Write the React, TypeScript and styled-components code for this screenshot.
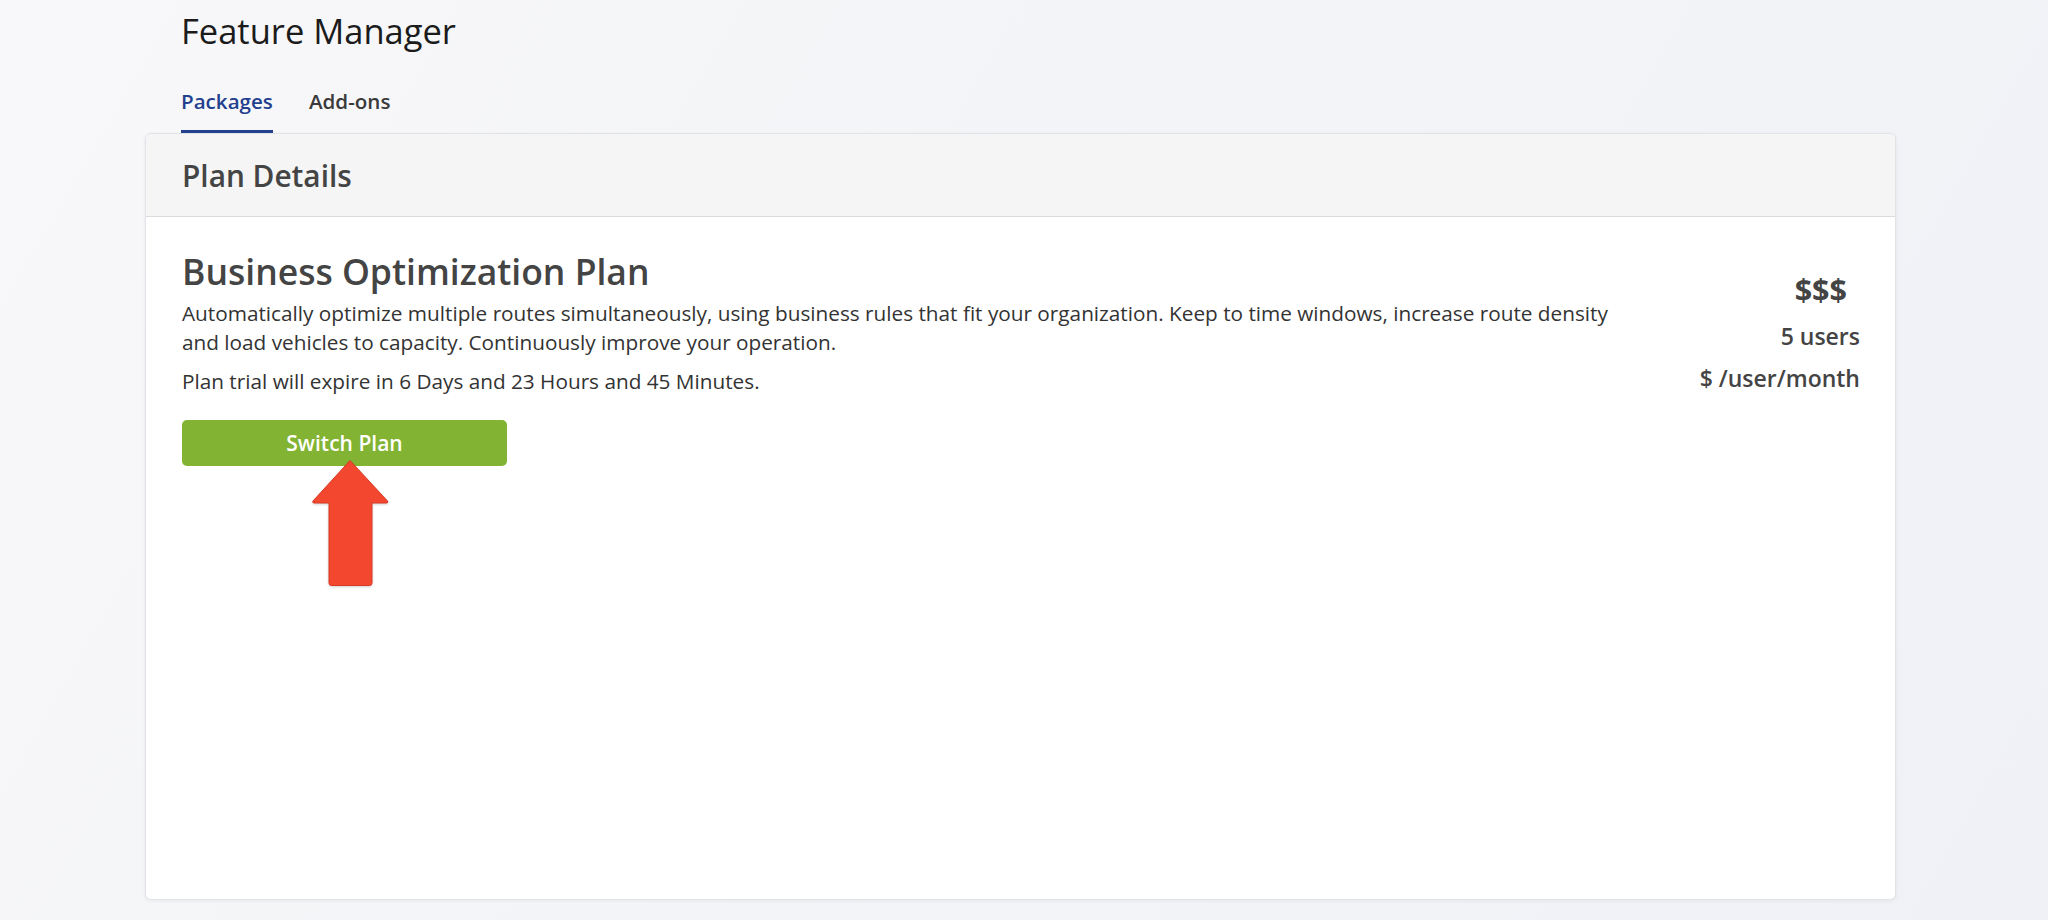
import React from "react";
import styled, { createGlobalStyle } from "styled-components";

const GlobalStyle = createGlobalStyle`
  html, body {
    margin: 0;
    padding: 0;
  }
  body {
    font-family: "Open Sans", "Noto Sans", Arial, sans-serif;
    background: linear-gradient(120deg, #f8f8fa 0%, #f3f4f7 50%, #eff1f6 100%);
    min-height: 920px;
  }
`;

const Page = styled.div`
  padding: 0 152px 20px 145px;
  box-sizing: border-box;
  width: 2048px;
  min-height: 920px;
`;

const TitleBar = styled.div`
  padding: 8px 0 0 36px;
`;

const Title = styled.h1`
  margin: 0;
  font-size: 34.5px;
  line-height: 46px;
  font-weight: 400;
  color: #1b1b1b;
`;

const Tabs = styled.div`
  display: flex;
  gap: 36px;
  margin-top: 32px;
  padding-left: 36px;
`;

const Tab = styled.div<{ $active?: boolean }>`
  font-size: 20.6px;
  line-height: 30px;
  font-weight: 600;
  padding-bottom: 14px;
  border-bottom: 3px solid ${(p) => (p.$active ? "#23408f" : "transparent")};
  color: ${(p) => (p.$active ? "#23408f" : "#3a3a3a")};
  cursor: pointer;
`;

const Card = styled.div`
  height: 767px;
  background: #ffffff;
  border: 1px solid #e2e3e6;
  border-radius: 6px;
  box-shadow: 0 1px 4px rgba(20, 30, 60, 0.06);
  display: flex;
  flex-direction: column;
  box-sizing: border-box;
  overflow: hidden;
`;

const CardHeader = styled.div`
  height: 82px;
  display: flex;
  align-items: center;
  padding-left: 36px;
  background: #f5f5f5;
  border-bottom: 1px solid #dcdcdc;
`;

const CardTitle = styled.h2`
  margin: 0;
  font-size: 29.8px;
  font-weight: 600;
  color: #444;
`;

const CardBody = styled.div`
  flex: 1;
  display: grid;
  grid-template-columns: 1440px 1fr;
  align-items: start;
  padding: 32px 35px 0 36px;
`;

const PlanInfo = styled.div`
  display: flex;
  flex-direction: column;
  align-items: flex-start;
`;

const PlanName = styled.h3`
  margin: 0;
  font-size: 35.5px;
  line-height: 44px;
  font-weight: 600;
  color: #444;
`;

const Description = styled.p`
  margin: 6px 0 0;
  font-size: 20.75px;
  line-height: 29px;
  color: #333;
`;

const Trial = styled.p`
  margin: 10px 0 0;
  font-size: 20.75px;
  line-height: 29px;
  color: #333;
`;

const ButtonWrap = styled.div`
  position: relative;
  margin-top: 24px;
`;

const SwitchButton = styled.button`
  width: 325px;
  height: 46px;
  border: none;
  border-radius: 5px;
  background: #82b332;
  color: #fff;
  font-family: "Open Sans", Arial, sans-serif;
  font-size: 21px;
  font-weight: 600;
  cursor: pointer;
`;

const ArrowMark = styled.svg`
  position: absolute;
  left: 129px;
  top: 39px;
  filter: drop-shadow(0 1px 1px rgba(0, 0, 0, 0.18));
`;

const Pricing = styled.div`
  display: flex;
  flex-direction: column;
  align-items: flex-end;
  padding-top: 20px;
  color: #444;
`;

const Price = styled.div`
  font-size: 30.5px;
  line-height: 40px;
  font-weight: 700;
  padding-right: 13px;
`;

const PriceLine = styled.div`
  margin-top: 12px;
  font-size: 23px;
  line-height: 30px;
  font-weight: 600;
`;

export default function App() {
  return (
    <>
      <GlobalStyle />
      <Page>
        <TitleBar>
          <Title>Feature Manager</Title>
        </TitleBar>
        <Tabs>
          <Tab $active>Packages</Tab>
          <Tab>Add-ons</Tab>
        </Tabs>
        <Card>
          <CardHeader>
            <CardTitle>Plan Details</CardTitle>
          </CardHeader>
          <CardBody>
            <PlanInfo>
              <PlanName>Business Optimization Plan</PlanName>
              <Description>
                Automatically optimize multiple routes simultaneously, using business rules that fit your
                organization. Keep to time windows, increase route density and load vehicles to capacity.
                Continuously improve your operation.
              </Description>
              <Trial>Plan trial will expire in 6 Days and 23 Hours and 45 Minutes.</Trial>
              <ButtonWrap>
                <SwitchButton>Switch Plan</SwitchButton>
                <ArrowMark width="80" height="130" viewBox="0 0 80 130">
                  <path
                    d="M39 1.5 L76.5 42 Q77.5 44 75.5 44 L61 44 L61 124 Q61 126.5 58.5 126.5 L20.5 126.5 Q18 126.5 18 124 L18 44 L3 44 Q1 43.5 2 42 Z"
                    fill="#f4472f"
                    stroke="#d93a24"
                    strokeWidth="1"
                    strokeLinejoin="round"
                  />
                </ArrowMark>
              </ButtonWrap>
            </PlanInfo>
            <Pricing>
              <Price>$$$</Price>
              <PriceLine>5 users</PriceLine>
              <PriceLine>$ /user/month</PriceLine>
            </Pricing>
          </CardBody>
        </Card>
      </Page>
    </>
  );
}
